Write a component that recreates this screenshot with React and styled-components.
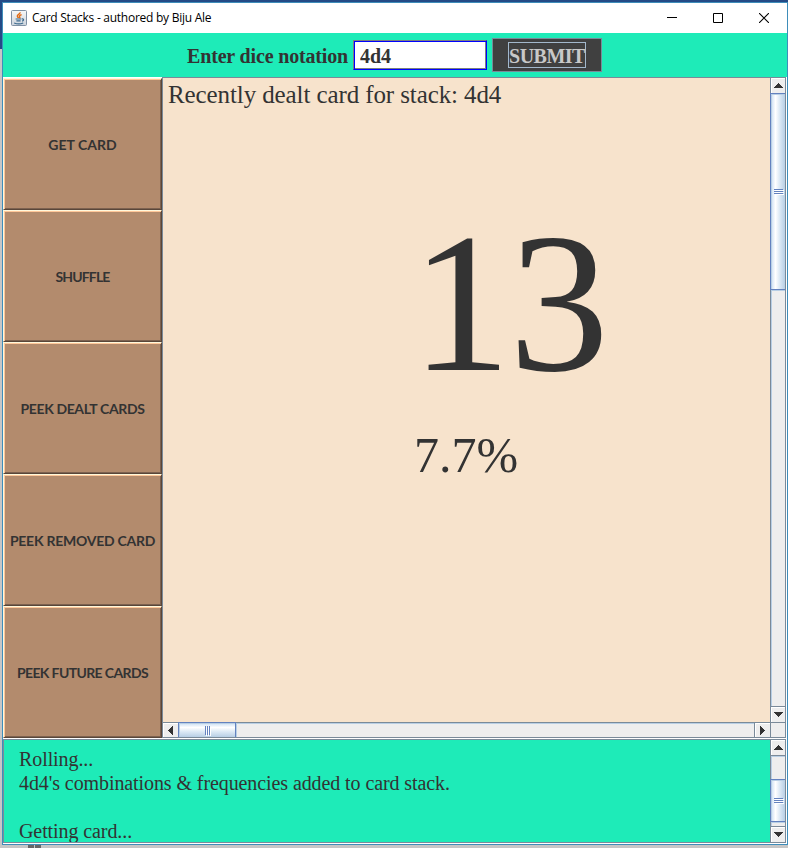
import React from "react";
import styled, { createGlobalStyle, css } from "styled-components";

const GlobalStyle = createGlobalStyle`
  * { box-sizing: border-box; }
  body { margin: 0; overflow: hidden; }
`;

const MINT = "#1eebb8";
const LINE = "#7a8a99";
const THUMB_LINE = "#6382bf";

const Desktop = styled.div`
  width: 788px;
  height: 848px;
  padding: 2px 0 0 2px;
  background: linear-gradient(#244a86 0 2px, transparent 2px),
    linear-gradient(#244a86 0 49px, #c6c6c6 49px 100%);
`;
const Frame = styled.div`
  width: 786px;
  height: 843px;
  border: 1px solid #3e8dba;
  background: #fff;
  display: flex;
  flex-direction: column;
`;
const TaskHint = styled.div`
  height: 3px;
  display: flex;
  gap: 1px;
  padding-left: 26px;
`;
const HintBlock = styled.span`
  width: 6px;
  height: 3px;
  background: #666;
`;
const TitleBar = styled.header`
  flex: none;
  height: 30px;
  display: flex;
  align-items: center;
  padding-left: 8px;
`;
const Title = styled.span`
  flex: 1;
  margin-left: 5px;
  font: 12px/16px "Open Sans", sans-serif;
  letter-spacing: -0.26px;
  color: #000;
`;
const WindowButton = styled.button`
  width: 46px;
  height: 30px;
  padding: 0;
  border: 0;
  background: none;
  display: flex;
  align-items: center;
  justify-content: center;
`;
const Toolbar = styled.form`
  flex: none;
  height: 44px;
  background: ${MINT};
  display: flex;
  align-items: center;
  padding: 0 0 0 184px;
  font: bold 20px/24px "Liberation Serif", serif;
  letter-spacing: -0.16px;
  color: #333;
`;
const NotationLabel = styled.label`
  width: 166px;
  padding-top: 2px;
  white-space: nowrap;
`;
const NotationInput = styled.input`
  width: 134px;
  height: 30px;
  padding: 2px 6px 0;
  border: 1px solid;
  border-color: #7a8080 #0000ff #0000ff #7a8080;
  border-radius: 0;
  box-shadow: inset 1px 1px #0000ff, inset -1px -1px #7a8080;
  background: #fff;
  font: inherit;
  color: #333;
  outline: none;
`;
const SubmitButton = styled.button`
  width: 110px;
  height: 34px;
  margin: 0 0 0 5px;
  padding: 0;
  border: 1px solid ${LINE};
  background: #404040;
  display: flex;
  align-items: center;
  justify-content: center;
  font: inherit;
  color: #c8c8c8;
`;
const FocusRing = styled.span`
  width: 78px;
  height: 26px;
  border: 1px solid #a3b8cc;
  line-height: 26px;
  letter-spacing: -0.5px;
`;
const Workspace = styled.main`
  flex: none;
  height: 662px;
  display: flex;
`;
const Sidebar = styled.nav`
  width: 159px;
  padding-top: 1px;
  display: flex;
  flex-direction: column;
`;
const StackButton = styled.button`
  height: 132px;
  padding: 2px 0 0;
  border: 1px solid;
  border-color: #fff8dc #594639 #594639 #fff8dc;
  box-shadow: inset 1px 1px #ffc799, inset -1px -1px #7d6250;
  background: #b38b6d;
  font: bold 14px/18px Lato, sans-serif;
  letter-spacing: ${(p) => p.$track}px;
  white-space: nowrap;
  color: #333;
`;
const Pane = styled.section`
  width: ${(p) => p.$width}px;
  height: ${(p) => p.$height}px;
  border: 1px solid ${LINE};
  display: grid;
  grid-template-columns: 1fr 15px;
  grid-template-rows: ${(p) => (p.$both ? "1fr 15px" : "1fr")};
`;
const CardView = styled.div`
  background: #f7e3cc;
  font-family: "Liberation Serif", serif;
  color: #333;
  overflow: hidden;
`;
const Caption = styled.div`
  padding-left: 5px;
  font-size: 25px;
  line-height: 34px;
  letter-spacing: -0.1px;
  white-space: nowrap;
`;
const CardValue = styled.div`
  margin-top: 76px;
  padding-left: 248px;
  font-size: 200px;
  line-height: 230px;
  letter-spacing: -2px;
`;
const CardOdds = styled.div`
  margin-top: 2px;
  padding-left: 251px;
  font-size: 50px;
  line-height: 70px;
`;
const LogPanel = styled.footer`
  flex: none;
`;
const Log = styled.div`
  padding: 7px 15px 0;
  background: ${MINT};
  font: 20px/24px "Liberation Serif", serif;
  letter-spacing: -0.09px;
  color: #333;
  white-space: pre;
  overflow: hidden;
`;
const Bar = styled.div`
  display: flex;
  flex-direction: ${(p) => (p.$horizontal ? "row" : "column")};
  background: #eee;
  ${(p) =>
    p.$horizontal
      ? css`border-top: 1px solid ${LINE};`
      : css`border-left: 1px solid ${LINE};`}
`;
const Arrow = styled.button`
  flex: none;
  width: ${(p) => (p.$horizontal ? p.$size : 14)}px;
  height: ${(p) => (p.$horizontal ? 14 : p.$size)}px;
  padding: 0;
  border: 0 solid ${LINE};
  ${(p) => p.$edge && css`border-${p.$edge}-width: 1px;`}
  background: #eee;
  box-shadow: inset 1px 1px #fff;
  display: flex;
  align-items: center;
  justify-content: center;
`;
const Track = styled.div`
  flex: ${(p) => (p.$size === undefined ? "1" : `0 0 ${p.$size}px`)};
  box-shadow: inset 1px 1px #b8cfe5;
`;
const Thumb = styled.div`
  flex: 0 0 ${(p) => p.$size}px;
  border: 0 solid ${THUMB_LINE};
  border-width: ${(p) => (p.$horizontal ? "0 1px" : "1px 0")};
  background: linear-gradient(
    ${(p) => (p.$horizontal ? "180deg" : "90deg")},
    #c8ddf2 0%, #fff 32%, #dce9f5 62%, #b8cfe5 100%
  );
  box-shadow: ${(p) =>
    p.$horizontal
      ? `0 -1px ${THUMB_LINE}, inset 1px 1px #b8cfe5`
      : `-1px 0 ${THUMB_LINE}, inset 1px 1px #b8cfe5`};
  display: flex;
  flex-direction: ${(p) => (p.$horizontal ? "row" : "column")};
  align-items: center;
  justify-content: center;
  gap: 1px;
`;
const Grip = styled.i`
  width: ${(p) => (p.$horizontal ? 1 : 9)}px;
  height: ${(p) => (p.$horizontal ? 9 : 1)}px;
  background: ${THUMB_LINE};
  box-shadow: 1px 1px #fff;
`;
const Corner = styled.div`
  border: solid ${LINE};
  border-width: 1px 0 0 1px;
  background: #eee;
`;

const arrows = {
  up: "M4 0h1v1h1v1h1v1h1v1h1v1H0V4h1V3h1V2h1V1h1z",
  down: "M0 0h9v1H8v1H7v1H6v1H5v1H4V4H3V3H2V2H1V1H0z",
  left: "M4 0h1v9H4V8H3V7H2V6H1V5H0V4h1V3h1V2h1V1h1z",
  right: "M0 0h1v1h1v1h1v1h1v1h1v1H4v1H3v1H2v1H1v1H0z",
};

function ArrowGlyph({ dir }) {
  const side = dir === "left" || dir === "right";
  return (
    <svg width={side ? 5 : 9} height={side ? 9 : 5} shapeRendering="crispEdges">
      <path d={arrows[dir]} fill="#333" />
    </svg>
  );
}

function ScrollBar({ horizontal, before, thumb }) {
  return (
    <Bar $horizontal={horizontal}>
      <Arrow type="button" $horizontal={horizontal} $size={before ? 16 : 15} $edge={before ? "bottom" : null}>
        <ArrowGlyph dir={horizontal ? "left" : "up"} />
      </Arrow>
      {before > 0 && <Track $size={before} />}
      <Thumb $size={thumb} $horizontal={horizontal}>
        <Grip $horizontal={horizontal} />
        <Grip $horizontal={horizontal} />
        <Grip $horizontal={horizontal} />
      </Thumb>
      <Track />
      <Arrow type="button" $horizontal={horizontal} $size={16} $edge={horizontal ? "left" : "top"}>
        <ArrowGlyph dir={horizontal ? "right" : "down"} />
      </Arrow>
    </Bar>
  );
}

function JavaIcon() {
  return (
    <svg width="16" height="16" viewBox="0 0 16 16" fill="none">
      <defs>
        <linearGradient id="tile" x2="0" y2="1">
          <stop stopColor="#f8f8f8" />
          <stop offset="1" stopColor="#cbd3dc" />
        </linearGradient>
      </defs>
      <rect x=".5" y=".5" width="15" height="15" rx="1" fill="url(#tile)" stroke="#7f90a4" />
      <path d="M9 2.200C9.500 4 6 4.600 6.300 6.200c.1.700.9 1.100 1.200 1.900M10.600 4.600C8.800 5.200 7.900 6 8.700 7c.4.500.1 1-.3 1.300" stroke="#e36a12" strokeWidth="1.400" />
      <path d="M4.600 9h5.600M5.400 10.800h4.200M3.200 13c2.500 1 6.700 1 9 0M10.800 8.900c2.400-.3 2.200 1.900.3 2.300" stroke="#3c6a8e" strokeWidth="1.200" />
    </svg>
  );
}

const actions = [
  ["GET CARD", 0.05],
  ["SHUFFLE", -0.85],
  ["PEEK DEALT CARDS", -0.37],
  ["PEEK REMOVED CARD", -0.25],
  ["PEEK FUTURE CARDS", -0.62],
];

const logText = "Rolling...\n4d4's combinations & frequencies added to card stack.\n\nGetting card...";

export default function App() {
  return (
    <>
      <GlobalStyle />
      <Desktop>
        <Frame>
          <TitleBar>
            <JavaIcon />
            <Title>Card Stacks - authored by Biju Ale</Title>
            <WindowButton aria-label="Minimize">
              <svg width="12" height="10"><path d="M1 4.500h10" stroke="#000" /></svg>
            </WindowButton>
            <WindowButton aria-label="Maximize">
              <svg width="10" height="10"><path d="M.5.500h9v9h-9z" fill="none" stroke="#000" /></svg>
            </WindowButton>
            <WindowButton aria-label="Close">
              <svg width="10" height="10"><path d="M0 0l10 10M10 0L0 10" stroke="#000" strokeWidth="1.100" /></svg>
            </WindowButton>
          </TitleBar>
          <Toolbar>
            <NotationLabel htmlFor="notation">Enter dice notation</NotationLabel>
            <NotationInput id="notation" defaultValue="4d4" />
            <SubmitButton type="button"><FocusRing>SUBMIT</FocusRing></SubmitButton>
          </Toolbar>
          <Workspace>
            <Sidebar>
              {actions.map(([label, track]) => (
                <StackButton key={label} $track={track}>{label}</StackButton>
              ))}
            </Sidebar>
            <Pane $width={624} $height={661} $both>
              <CardView>
                <Caption>Recently dealt card for stack: 4d4</Caption>
                <CardValue>13</CardValue>
                <CardOdds>7.7%</CardOdds>
              </CardView>
              <ScrollBar before={0} thumb={197} />
              <ScrollBar horizontal before={0} thumb={58} />
              <Corner />
            </Pane>
          </Workspace>
          <LogPanel>
            <Pane $width={783} $height={104}>
              <Log>{logText}</Log>
              <ScrollBar before={23} thumb={43} />
            </Pane>
          </LogPanel>
        </Frame>
        <TaskHint><HintBlock /><HintBlock /></TaskHint>
      </Desktop>
    </>
  );
}
